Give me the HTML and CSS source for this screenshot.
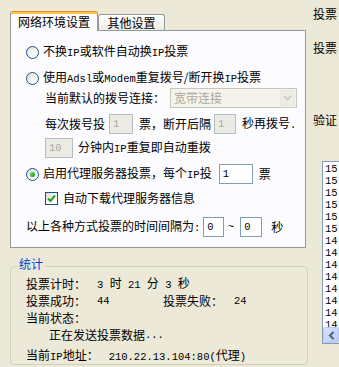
FILE: index.html
```html
<!DOCTYPE html>
<html lang="zh-CN">
<head>
    <meta charset="UTF-8">
    <title>投票设置</title>
    <link rel="stylesheet" href="styles.css">
</head>
<body>
    <div class="window">
        <div class="main">
            <div class="tabs">
                <div class="tab active">网络环境设置</div>
                <div class="tab">其他设置</div>
            </div>
            <div class="panel">
                <div class="row opt first">
                    <span class="radio"></span>
                    <span>不换<span class="en">IP</span>或软件自动换<span class="en">IP</span>投票</span>
                </div>
                <div class="row opt">
                    <span class="radio"></span>
                    <span>使用<span class="en">Adsl</span>或<span class="en">Modem</span>重复拨号/断开换<span class="en">IP</span>投票</span>
                </div>
                <div class="row sub flush">
                    <span>当前默认的拨号连接：</span>
                    <div class="select disabled">
                        <span class="select-text">宽带连接</span>
                        <span class="select-btn">
                            <svg width="9" height="6" viewBox="0 0 9 6"><path d="M1 1 L4.5 4.5 L8 1" fill="none" stroke="#c9c7ba" stroke-width="1.6"/></svg>
                        </span>
                    </div>
                </div>
                <div class="row sub">
                    <span>每次拨号投</span>
                    <input class="input w24 ml4" value="1" disabled>
                    <span class="ml6">票，断开后隔</span>
                    <input class="input w22 ml3" value="1" disabled>
                    <span class="ml6">秒再拨号<span class="en">.</span></span>
                </div>
                <div class="row sub tight">
                    <input class="input w28" value="10" disabled>
                    <span class="ml5">分钟内<span class="en">IP</span>重复即自动重拨</span>
                </div>
                <div class="row opt">
                    <span class="radio checked"></span>
                    <span>启用代理服务器投票，每个<span class="en">IP</span>投</span>
                    <input class="input w34 ml7" value="1">
                    <span class="ml6">票</span>
                </div>
                <div class="row sub tight">
                    <span class="checkbox">
                        <svg width="9" height="9" viewBox="0 0 9 9"><path d="M1 4.5 L3.5 7 L8 1.5" fill="none" stroke="#21a121" stroke-width="2"/></svg>
                    </span>
                    <span>自动下载代理服务器信息</span>
                </div>
                <div class="row opt wide">
                    <span>以上各种方式投票的时间间隔为<span class="en">:</span></span>
                    <input class="input w21 ml3" value="0">
                    <span class="tilde en ml3">~</span>
                    <input class="input w22 ml6" value="0">
                    <span class="ml9">秒</span>
                </div>
            </div>

            <fieldset class="stats">
                <legend>统计</legend>
                <div class="stat-row">
                    <span class="k">投票计时：</span>
                    <span class="v"><span class="en">3 </span>时<span class="en"> 21 </span>分<span class="en"> 3 </span>秒</span>
                </div>
                <div class="stat-row">
                    <span class="cell">
                        <span class="k">投票成功：</span>
                        <span class="v en">44</span>
                    </span>
                    <span class="k">投票失败：</span>
                    <span class="v en">24</span>
                </div>
                <div class="stat-row">
                    <span class="k">当前状态：</span>
                </div>
                <div class="stat-row status">正在发送投票数据<span class="en">...</span></div>
                <div class="stat-row ip">
                    <span class="k">当前<span class="en">IP</span>地址：</span>
                    <span class="v ipv"><span class="en">210.22.13.104:80(</span>代理<span class="en">)</span></span>
                </div>
            </fieldset>
        </div>

        <div class="side">
            <div class="side-label l1">投票</div>
            <div class="side-label l2">投票</div>
            <div class="side-label l3">验证</div>
            <div class="listbox">
                <div class="list-rows">
                    <div class="item">15</div>
                    <div class="item">15</div>
                    <div class="item">15</div>
                    <div class="item">15</div>
                    <div class="item">15</div>
                    <div class="item">15</div>
                    <div class="item">14</div>
                    <div class="item">14</div>
                    <div class="item">14</div>
                    <div class="item">14</div>
                    <div class="item">14</div>
                    <div class="item">14</div>
                    <div class="item">14</div>
                    <div class="item">14</div>
                </div>
                <div class="hscroll">
                    <span class="scroll-btn">
                        <svg width="7" height="9" viewBox="0 0 7 9"><path d="M5.5 1 L2 4.5 L5.5 8" fill="none" stroke="#4d6185" stroke-width="2"/></svg>
                    </span>
                </div>
            </div>
        </div>
    </div>
</body>
</html>
```

FILE: styles.css
```css
body {
    margin: 0;
    width: 339px;
    height: 367px;
    overflow: hidden;
    background-color: #ece9d8;
    font-family: "Noto Sans CJK SC", sans-serif;
    font-size: 12px;
    line-height: 14px;
    color: #000;
}
.window {
    display: flex;
    height: 100%;
}
.main {
    width: 298px;
    padding-left: 10px;
    flex-shrink: 0;
}
.en {
    font-family: "Liberation Mono", monospace;
    font-size: 10.5px;
}

/* tabs */
.tabs {
    display: flex;
    align-items: flex-end;
    margin-top: 11px;
    margin-bottom: -1px;
    height: 20px;
}
.tab {
    position: relative;
    box-sizing: border-box;
    width: 67px;
    height: 16px;
    margin-bottom: 1px;
    border: 1px solid #919b9c;
    border-bottom: none;
    border-radius: 3px 3px 0 0;
    background: linear-gradient(#ffffff, #ecebe6);
    display: flex;
    align-items: center;
    justify-content: center;
    white-space: nowrap;
}
.tab.active {
    z-index: 1;
    width: 88px;
    height: 20px;
    margin-bottom: 0;
    padding-top: 1px;
    background: #fcfcfe;
    border-top: 1px solid #e68b2c;
    box-shadow: inset 0 2px 0 #ffc73c;
}
.panel {
    box-sizing: border-box;
    width: 296px;
    height: 218px;
    padding-top: 11px;
    border: 1px solid #919b9c;
    background-color: #fcfcfe;
}

/* rows inside the panel */
.row {
    display: flex;
    align-items: center;
    height: 20px;
    margin-top: 6px;
    white-space: nowrap;
}
.row.first, .row.flush {
    margin-top: 0;
}
.row.tight {
    margin-top: 4px;
}
.row.wide {
    margin-top: 9px;
}
.row.opt {
    padding-left: 15px;
}
.row.sub {
    padding-left: 34px;
}

.radio {
    box-sizing: border-box;
    width: 13px;
    height: 13px;
    margin-right: 4px;
    border: 1px solid #1c5180;
    border-radius: 50%;
    background: linear-gradient(135deg, #dcdcd7, #ffffff 70%);
    display: flex;
    align-items: center;
    justify-content: center;
    flex-shrink: 0;
}
.radio.checked::after {
    content: "";
    width: 5px;
    height: 5px;
    border-radius: 50%;
    background: radial-gradient(circle at 35% 35%, #5ce05c, #21a121 70%);
}
.checkbox {
    box-sizing: border-box;
    width: 13px;
    height: 13px;
    margin-right: 5px;
    border: 1px solid #1c5180;
    background: linear-gradient(135deg, #dcdcd7, #ffffff 70%);
    display: flex;
    align-items: center;
    justify-content: center;
}

.input {
    box-sizing: border-box;
    height: 20px;
    margin: 0;
    padding: 0 3px;
    border: 1px solid #7f9db9;
    background-color: #ffffff;
    font-family: "Liberation Mono", monospace;
    font-size: 10.5px;
    color: #000;
    outline: none;
}
.input:disabled {
    border-color: #b4bcc6;
    background-color: #ebebe4;
    color: #aca899;
}
.w21 { width: 21px; }
.w22 { width: 22px; }
.w24 { width: 24px; }
.w28 { width: 28px; }
.w34 { width: 34px; }
.tilde {
    width: 7px;
    text-align: center;
}

.select {
    box-sizing: border-box;
    display: flex;
    align-items: center;
    justify-content: space-between;
    width: 127px;
    height: 20px;
    margin-left: 5px;
    padding: 1px;
    border: 1px solid #c9c7ba;
    background-color: #f4f3ee;
}
.select-text {
    padding-left: 2px;
    color: #aca899;
}
.select-btn {
    box-sizing: border-box;
    width: 15px;
    height: 16px;
    border: 1px solid #e8e6dc;
    border-radius: 2px;
    background-color: #eeede5;
    display: flex;
    align-items: center;
    justify-content: center;
}

/* statistics group */
.stats {
    box-sizing: border-box;
    width: 298px;
    margin: 9px 0 0;
    padding: 0 0 0 15px;
    border: 1px solid #d0d0bf;
    border-radius: 4px;
    min-width: 0;
}
.stats legend {
    margin-left: -9px;
    padding: 0 2px 4px;
    color: #0046d5;
}
.stat-row {
    display: flex;
    align-items: center;
    height: 17px;
    white-space: nowrap;
}
.stat-row .cell {
    display: flex;
    width: 137px;
}
.stat-row .v {
    margin-left: 11px;
}
.stat-row.status {
    padding-left: 23px;
}
.stat-row.ip {
    margin-top: 4px;
}
.stat-row .ipv {
    margin-left: 10px;
}

/* right column, cut by the window edge */
.side {
    flex: 1;
    min-width: 0;
    padding-left: 5px;
    overflow: hidden;
}
.side-label {
    height: 14px;
    white-space: nowrap;
}
.l1 { margin-top: 7px; }
.l2 { margin-top: 20px; }
.l3 { margin-top: 58px; }
.listbox {
    display: flex;
    flex-direction: column;
    box-sizing: border-box;
    width: 80px;
    height: 183px;
    margin-top: 34px;
    margin-left: 9px;
    border: 1px solid #7f9db9;
    background-color: #ffffff;
}
.list-rows {
    flex: 1;
    overflow: hidden;
    padding: 1px 0 0 2px;
}
.item {
    height: 12px;
    line-height: 12px;
    font-family: "Liberation Mono", monospace;
    font-size: 10.5px;
}
.hscroll {
    height: 16px;
    display: flex;
    background-color: #f4f4f0;
}
.scroll-btn {
    box-sizing: border-box;
    width: 16px;
    height: 16px;
    border: 1px solid #b9c9ef;
    border-radius: 2px;
    background: linear-gradient(135deg, #d9e3fb, #b7c9f5);
    display: flex;
    align-items: center;
    justify-content: center;
}

/* spacing helpers, last so they win over the control rules */
.ml3 { margin-left: 3px; }
.ml4 { margin-left: 4px; }
.ml5 { margin-left: 5px; }
.ml6 { margin-left: 6px; }
.ml7 { margin-left: 7px; }
.ml9 { margin-left: 9px; }
```
